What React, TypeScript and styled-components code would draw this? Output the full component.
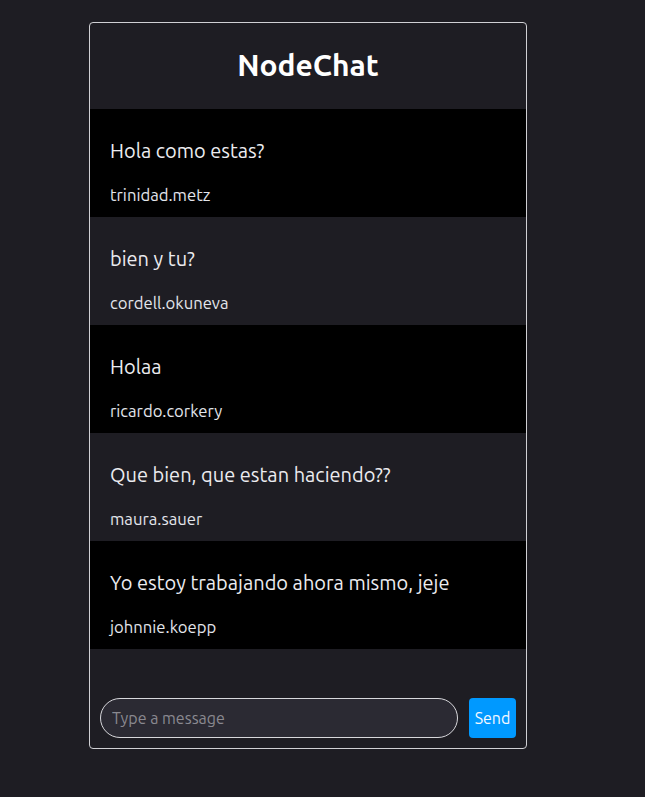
import React, { useState } from 'react';
import styled, { createGlobalStyle } from 'styled-components';

const GlobalStyle = createGlobalStyle`
  body {
    margin: 0;
    background: #1e1d23;
    font-family: Ubuntu, "Open Sans", "Noto Sans", sans-serif;
  }
  * {
    box-sizing: border-box;
  }
`;

const Page = styled.div`
  min-height: 100vh;
  padding: 22px 0 0 89px;
`;

const Card = styled.div`
  width: 438px;
  border: 1px solid #d0d0d4;
  border-radius: 4px;
  background: #1e1d23;
  overflow: hidden;
  display: flex;
  flex-direction: column;
`;

const Header = styled.h1`
  margin: 0;
  height: 86px;
  padding-bottom: 2px;
  display: flex;
  align-items: center;
  justify-content: center;
  font-size: 30px;
  font-weight: 700;
  color: #ffffff;
`;

const MessageList = styled.div`
  display: flex;
  flex-direction: column;
  height: 589px;
`;

const Message = styled.div<{ $dark: boolean }>`
  height: 108px;
  padding: 30px 20px 0 20px;
  background: ${p => (p.$dark ? '#000000' : '#1e1d23')};
`;

const Text = styled.p`
  margin: 0 0 22px 0;
  font-size: 20px;
  line-height: 24px;
  color: #ececf0;
`;

const User = styled.span`
  display: block;
  font-size: 16.66px;
  line-height: 20px;
  color: #e4e6ec;
`;

const Form = styled.form`
  display: flex;
  align-items: center;
  gap: 11px;
  padding: 0 10px 10px 10px;
`;

const Input = styled.input`
  flex: 1;
  height: 40px;
  border: 1px solid #d8d8dc;
  border-radius: 20px;
  background: #2b2a33;
  color: #ececf0;
  font-family: inherit;
  font-size: 16px;
  padding: 0 11px;
  outline: none;
  &::placeholder {
    color: #8a8990;
  }
`;

const SendButton = styled.button`
  height: 40px;
  width: 47px;
  border: none;
  border-radius: 4px;
  background: #0099ff;
  color: #f4f8ff;
  font-family: inherit;
  font-size: 16px;
  padding: 0;
  cursor: pointer;
`;

const messages = [
  { text: 'Hola como estas?', user: 'trinidad.metz' },
  { text: 'bien y tu?', user: 'cordell.okuneva' },
  { text: 'Holaa', user: 'ricardo.corkery' },
  { text: 'Que bien, que estan haciendo??', user: 'maura.sauer' },
  { text: 'Yo estoy trabajando ahora mismo, jeje', user: 'johnnie.koepp' },
];

const App: React.FC = () => {
  const [value, setValue] = useState('');

  return (
    <Page>
      <GlobalStyle />
      <Card>
        <Header>NodeChat</Header>
        <MessageList>
          {messages.map((m, i) => (
            <Message key={i} $dark={i % 2 === 0}>
              <Text>{m.text}</Text>
              <User>{m.user}</User>
            </Message>
          ))}
        </MessageList>
        <Form onSubmit={e => e.preventDefault()}>
          <Input
            placeholder="Type a message"
            value={value}
            onChange={e => setValue(e.target.value)}
          />
          <SendButton type="submit">Send</SendButton>
        </Form>
      </Card>
    </Page>
  );
};

export default App;
